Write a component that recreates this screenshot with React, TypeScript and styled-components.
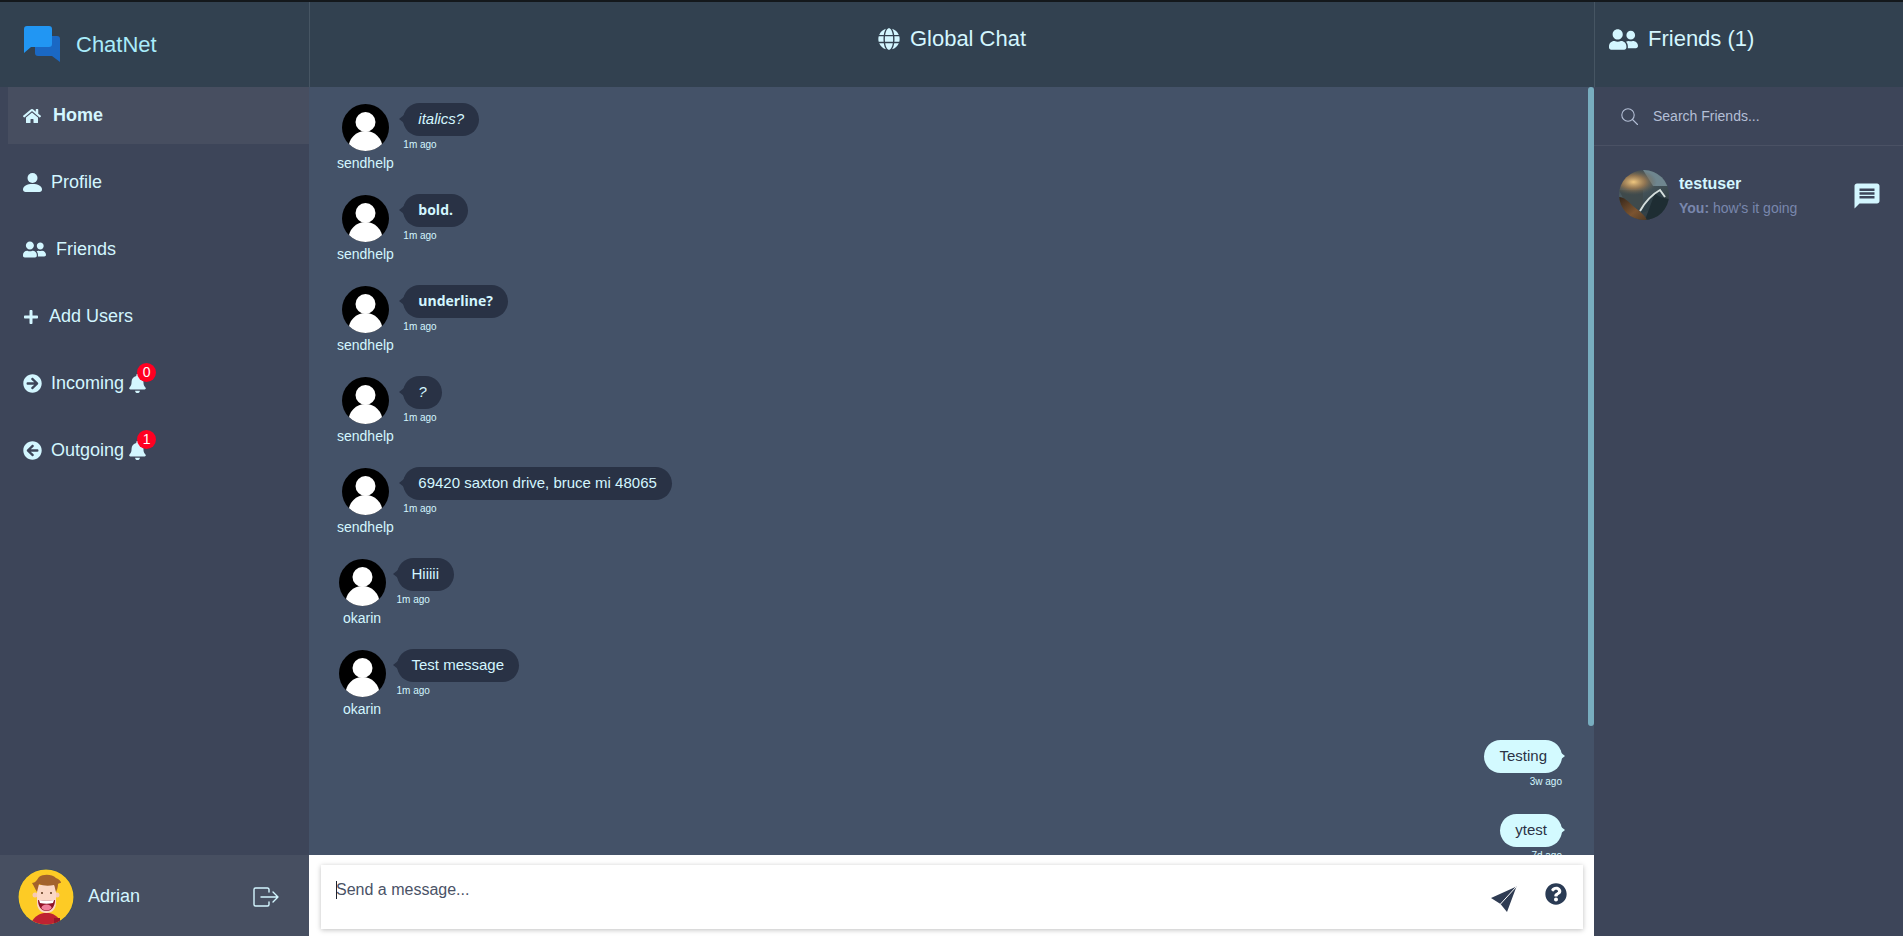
import React from "react";
import styled, { createGlobalStyle } from "styled-components";
import {
  FaArrowCircleLeft,
  FaArrowCircleRight,
  FaBell,
  FaGlobe,
  FaHome,
  FaPlus,
  FaQuestionCircle,
  FaUserFriends,
} from "react-icons/fa";
import { MdMessage } from "react-icons/md";

const MINT = "#d3f6ff";

interface Message {
  user: string;
  text: string;
  time: string;
  variant?: "italic" | "bold";
}

const incoming: Message[] = [
  { user: "sendhelp", text: "italics?", time: "1m ago", variant: "italic" },
  { user: "sendhelp", text: "bold.", time: "1m ago", variant: "bold" },
  { user: "sendhelp", text: "underline?", time: "1m ago", variant: "bold" },
  { user: "sendhelp", text: "?", time: "1m ago", variant: "italic" },
  { user: "sendhelp", text: "69420 saxton drive, bruce mi 48065", time: "1m ago" },
  { user: "okarin", text: "Hiiiii", time: "1m ago" },
  { user: "okarin", text: "Test message", time: "1m ago" },
];

const outgoing = [
  { text: "Testing", time: "3w ago" },
  { text: "ytest", time: "7d ago" },
];

const GlobalStyle = createGlobalStyle`
  html, body, #root {
    margin: 0;
    height: 100%;
    overflow: hidden;
  }
  body {
    font-family: "Liberation Sans", Arial, sans-serif;
    background: #3d4559;
  }
  * {
    box-sizing: border-box;
  }
`;

const Layout = styled.div`
  display: grid;
  grid-template-columns: 309px 1fr 309px;
  height: 100vh;
  border-top: 2px solid #14181c;
`;

const Column = styled.div`
  display: flex;
  flex-direction: column;
  min-height: 0;
  min-width: 0;
  background: #3d4559;
`;

const Header = styled.header<{ $center?: boolean; $divided?: boolean }>`
  height: 85px;
  flex-shrink: 0;
  display: flex;
  background: #324150;
  color: ${MINT};
  font-size: 22px;
  justify-content: ${({ $center }) => ($center ? "center" : "flex-start")};
  border-left: ${({ $divided }) => ($divided ? "1px solid #465563" : "none")};
`;

const Brand = styled.div`
  display: flex;
  align-items: center;
  gap: 14px;
  padding-left: 24px;
  color: #a9ecfb;
`;

const HeaderTitle = styled.div`
  display: flex;
  align-items: center;
  height: 74px;
  gap: 10px;
`;

const FriendsTitle = styled(HeaderTitle)`
  padding-left: 14px;
`;

const Nav = styled.nav`
  flex: 1;
  display: flex;
  flex-direction: column;
  gap: 10px;
  padding-left: 8px;
`;

const NavItem = styled.a<{ $active?: boolean; $gap?: number }>`
  height: 57px;
  display: flex;
  align-items: center;
  gap: ${({ $gap }) => $gap ?? 10}px;
  padding-left: 15px;
  font-size: 18px;
  color: ${MINT};
  font-weight: ${({ $active }) => ($active ? 700 : 400)};
  background: ${({ $active }) => ($active ? "#474e60" : "transparent")};
`;

const BellWrap = styled.span`
  position: relative;
  display: flex;
  margin-left: -5px;
`;

const Badge = styled.span`
  position: absolute;
  left: 9px;
  top: -11px;
  width: 19px;
  height: 19px;
  border-radius: 50%;
  background: #ff0022;
  color: #fff;
  font-size: 14px;
  line-height: 19px;
  text-align: center;
`;

const UserBar = styled.footer`
  height: 81px;
  flex-shrink: 0;
  display: flex;
  align-items: center;
  padding: 2px 30px 0 18px;
  background: #474f61;
  color: ${MINT};
  font-size: 18px;
`;

const UserName = styled.span`
  flex: 1;
  margin-left: 14px;
`;

const ChatPane = styled.div`
  position: relative;
  flex: 1;
  min-height: 0;
  overflow: hidden;
  background: #445268;
`;

const ScrollThumb = styled.div`
  position: absolute;
  top: 0;
  right: 0;
  width: 6px;
  height: 639px;
  border-radius: 3px;
  background: #78adbf;
`;

const MessageList = styled.div`
  display: flex;
  flex-direction: column;
  gap: 23px;
  padding: 16px 32px 0 28px;
`;

const IncomingRow = styled.div`
  display: flex;
  align-items: flex-start;
  gap: 9.5px;
`;

const Sender = styled.div`
  min-width: 50px;
  display: flex;
  flex-direction: column;
  align-items: center;
  padding-top: 1px;
  font-size: 14px;
  line-height: 16px;
  color: ${MINT};
`;

const SenderName = styled.span`
  margin-top: 4px;
`;

const BubbleColumn = styled.div<{ $right?: boolean }>`
  display: flex;
  flex-direction: column;
  align-items: ${({ $right }) => ($right ? "flex-end" : "flex-start")};
  padding-bottom: ${({ $right }) => ($right ? "3px" : "0")};
`;

const Bubble = styled.div<{ $mine?: boolean; $variant?: string }>`
  position: relative;
  height: 33px;
  padding: 0 15px 2px;
  border-radius: 17px;
  display: flex;
  align-items: center;
  font-size: ${({ $variant }) => ($variant === "bold" ? "14px" : "15px")};
  background: ${({ $mine }) => ($mine ? "#d3faff" : "#293245")};
  color: ${({ $mine }) => ($mine ? "#2b3245" : MINT)};
  font-style: ${({ $variant }) => ($variant === "italic" ? "italic" : "normal")};
  font-weight: ${({ $variant }) => ($variant === "bold" ? 700 : 400)};
  font-family: ${({ $variant }) =>
    $variant === "bold" ? '"Open Sans", sans-serif' : '"Liberation Sans", sans-serif'};

  &::before {
    content: "";
    position: absolute;
    top: 12px;
    ${({ $mine }) => ($mine ? "right: -3px;" : "left: -4px;")}
    border-top: 4.5px solid transparent;
    border-bottom: 4.5px solid transparent;
    ${({ $mine }) =>
      $mine ? "border-left: 5px solid #d3faff;" : "border-right: 5px solid #293245;"}
  }
`;

const Stamp = styled.span`
  margin-top: 3px;
  font-size: 10px;
  line-height: 12px;
  color: ${MINT};
`;

const OutgoingRow = styled.div`
  display: flex;
  justify-content: flex-end;
`;

const Composer = styled.div`
  height: 81px;
  flex-shrink: 0;
  background: #fff;
  padding: 10px 11px 7px 12px;
`;

const ComposerBox = styled.div`
  height: 64px;
  display: flex;
  align-items: flex-start;
  background: #fff;
  box-shadow: 0 1px 5px rgba(0, 0, 0, 0.25);
  padding: 16px 16px 0 15px;
`;

const InputWrap = styled.div`
  position: relative;
  flex: 1;
`;

const Caret = styled.span`
  position: absolute;
  left: 0;
  top: 0;
  width: 1px;
  height: 18px;
  background: #1c2230;
`;

const MessageInput = styled.textarea`
  display: block;
  width: 100%;
  height: 32px;
  border: none;
  outline: none;
  resize: none;
  padding: 0;
  font-family: "Liberation Sans", sans-serif;
  font-size: 16px;
  line-height: 18px;
  color: #2b3245;

  &::placeholder {
    color: #4a5266;
    opacity: 1;
  }
`;

const ComposerActions = styled.div`
  display: flex;
  align-items: flex-start;
  gap: 28px;
  color: #2a3b54;

  > svg:last-child {
    margin-top: 2px;
  }
`;

const SendIcon = styled.svg`
  width: 26px;
  height: 26px;
  margin-top: 5px;
`;

const SearchRow = styled.div`
  height: 59px;
  flex-shrink: 0;
  display: flex;
  align-items: center;
  gap: 13px;
  padding-left: 27px;
  border-bottom: 1px solid #4a5164;
`;

const SearchInput = styled.input`
  flex: 1;
  min-width: 0;
  border: none;
  outline: none;
  background: transparent;
  font-family: "Liberation Sans", sans-serif;
  font-size: 14px;
  color: #c3cde0;

  &::placeholder {
    color: #b4bfd6;
    opacity: 1;
  }
`;

const FriendRow = styled.div`
  display: flex;
  align-items: center;
  padding: 24px 21px 0 25px;
`;

const FriendText = styled.div`
  flex: 1;
  margin-left: 10px;
`;

const FriendName = styled.div`
  font-size: 16px;
  line-height: 18px;
  font-weight: 700;
  color: ${MINT};
`;

const LastMessage = styled.div`
  margin-top: 7px;
  font-size: 14px;
  line-height: 16px;
  color: #7987ad;

  b {
    font-weight: 700;
  }
`;

const ChatIcon = styled(MdMessage)`
  margin-top: 2px;
`;

const Logo = () => (
  <svg width="38" height="38" viewBox="0 0 38 38">
    <path d="M11 10h22a3 3 0 0 1 3 3v23l-8-6H14a3 3 0 0 1-3-3z" fill="#1a68c4" />
    <path d="M3 0h22a3 3 0 0 1 3 3v15a3 3 0 0 1-3 3H7l-7 6V3a3 3 0 0 1 3-3z" fill="#2196f3" />
  </svg>
);

const PersonIcon = () => (
  <svg width="19" height="19" viewBox="0 0 19 19" fill="currentColor">
    <circle cx="9.500" cy="5" r="5" />
    <path d="M0 16.500C0 13 4 11 9.500 11S19 13 19 16.500c0 1.500-1 2.500-2.500 2.500h-14C1 19 0 18 0 16.500z" />
  </svg>
);

const DefaultAvatar = () => (
  <svg width="47" height="47" viewBox="0 0 47 47">
    <defs>
      <clipPath id="avatarClip">
        <circle cx="23.5" cy="23.5" r="23.5" />
      </clipPath>
    </defs>
    <circle cx="23.5" cy="23.5" r="23.5" fill="#000" />
    <g clipPath="url(#avatarClip)" fill="#fff">
      <circle cx="23.5" cy="18" r="10" />
      <ellipse cx="23.5" cy="44" rx="17" ry="17" />
    </g>
  </svg>
);

const AdrianAvatar = () => (
  <svg width="56" height="56" viewBox="0 0 56 56">
    <defs>
      <clipPath id="adrianClip">
        <circle cx="28" cy="28" r="27.5" />
      </clipPath>
    </defs>
    <circle cx="28" cy="28" r="28" fill="#2b4a63" />
    <g clipPath="url(#adrianClip)">
      <rect width="56" height="56" fill="#fdcb25" />
      <path d="M13 56c1-7 7-11 13-12h5c6 1 11 5 13 12z" fill="#bf2231" />
      <rect x="36" y="49" width="6" height="5" fill="#96192a" />
      <circle cx="17" cy="26" r="2.500" fill="#f6c9b4" />
      <circle cx="39" cy="26" r="2.500" fill="#f6c9b4" />
      <path d="M19 16h19v18c0 6-4 10-9.500 10S19 40 19 34z" fill="#fbd7c4" />
      <path d="M14 14c3 0 5-3 7-6 4-3 13-3 17 1 3 1 5 3 5 5-1 0-2 0-3 1 0 3-1 6-2 8-1-3-1-5-2-7-5 1-11 1-15-1l-2 8c-2-3-3-6-5-9z" fill="#a3622c" />
      <path d="M20 31c6 1 11 1 17 0 0 6-3 11-8.500 11S20 37 20 31z" fill="#8e1226" />
      <path d="M21 31c5 1 10 1 15 0l-1 3c-4 1-9 1-13 0z" fill="#fff" />
      <ellipse cx="28.500" cy="38.500" rx="5" ry="3" fill="#f07f9c" />
      <circle cx="24" cy="24" r="1" fill="#5a3318" />
      <circle cx="33" cy="24" r="1" fill="#5a3318" />
    </g>
  </svg>
);

const FriendAvatar = () => (
  <svg width="50" height="50" viewBox="0 0 50 50">
    <defs>
      <clipPath id="friendClip">
        <circle cx="25" cy="25" r="25" />
      </clipPath>
      <radialGradient id="sunGlow" cx="30%" cy="24%" r="26%" gradientTransform="translate(-0.25 0) scale(1.8 1)">
        <stop offset="0%" stopColor="#f0c77f" />
        <stop offset="50%" stopColor="#9d7a50" stopOpacity="0.85" />
        <stop offset="100%" stopColor="#5e5c52" stopOpacity="0" />
      </radialGradient>
      <linearGradient id="skyFade" x1="0" y1="0" x2="0.6" y2="1">
        <stop offset="0%" stopColor="#3b4448" />
        <stop offset="40%" stopColor="#4a5a60" />
        <stop offset="100%" stopColor="#2d3a40" />
      </linearGradient>
      <linearGradient id="cliffFade" x1="0" y1="0" x2="1" y2="1">
        <stop offset="0%" stopColor="#33251a" />
        <stop offset="60%" stopColor="#7c5430" />
        <stop offset="100%" stopColor="#4f3a26" />
      </linearGradient>
    </defs>
    <g clipPath="url(#friendClip)">
      <rect width="50" height="50" fill="url(#skyFade)" />
      <path d="M24 0h26v16L34 16z" fill="#6f868f" />
      <path d="M0 20h24v20L6 32z" fill="#3f4a4c" />
      <rect width="50" height="50" fill="url(#sunGlow)" />
      <path d="M22 41c6-9 12-17 20-22l4 6c-5 8-13 15-23 18z" fill="#2d3e45" />
      <path d="M36 23c3 3 6 5 14 6v21H26z" fill="#1e2d33" />
      <path d="M0 27c5 0 9 4 14 9 5 4 12 9 14 14H0z" fill="url(#cliffFade)" />
      <path d="M21 41c5-9 11-16 20-21l5 7" fill="none" stroke="#d4dedc" strokeWidth="2" />
    </g>
  </svg>
);

const ExitIcon = () => (
  <svg width="26" height="20" viewBox="0 0 26 20" fill="none" stroke={MINT} strokeWidth="1.4" strokeLinecap="round" strokeLinejoin="round">
    <path d="M16 5V2.5A1.5 1.5 0 0 0 14.5 1h-12A1.5 1.5 0 0 0 1 2.5v15A1.5 1.5 0 0 0 2.5 19h12a1.5 1.5 0 0 0 1.5-1.5V15" />
    <path d="M8 10h17M20 5l5 5-5 5" />
  </svg>
);

const SearchGlyph = () => (
  <svg width="17" height="17" viewBox="0 0 17 17" fill="none" stroke="#b4bfd6" strokeWidth="1.1" strokeLinecap="round">
    <circle cx="7" cy="7" r="6.2" />
    <path d="M11.5 11.5l5 5" />
  </svg>
);

export default function App() {
  return (
    <>
      <GlobalStyle />
      <Layout>
        <Column>
          <Header>
            <Brand>
              <Logo />
              ChatNet
            </Brand>
          </Header>
          <Nav>
            <NavItem $active $gap={12}>
              <FaHome size={18} />
              Home
            </NavItem>
            <NavItem $gap={9}>
              <PersonIcon />
              Profile
            </NavItem>
            <NavItem>
              <FaUserFriends size={23} />
              Friends
            </NavItem>
            <NavItem>
              <FaPlus size={16} />
              Add Users
            </NavItem>
            <NavItem $gap={9}>
              <FaArrowCircleRight size={19} />
              Incoming
              <BellWrap>
                <FaBell size={19} />
                <Badge>0</Badge>
              </BellWrap>
            </NavItem>
            <NavItem $gap={9}>
              <FaArrowCircleLeft size={19} />
              Outgoing
              <BellWrap>
                <FaBell size={19} />
                <Badge>1</Badge>
              </BellWrap>
            </NavItem>
          </Nav>
          <UserBar>
            <AdrianAvatar />
            <UserName>Adrian</UserName>
            <ExitIcon />
          </UserBar>
        </Column>

        <Column>
          <Header $center $divided>
            <HeaderTitle>
              <FaGlobe size={22} />
              Global Chat
            </HeaderTitle>
          </Header>
          <ChatPane>
            <MessageList>
              {incoming.map((message, index) => (
                <IncomingRow key={index}>
                  <Sender>
                    <DefaultAvatar />
                    <SenderName>{message.user}</SenderName>
                  </Sender>
                  <BubbleColumn>
                    <Bubble $variant={message.variant}>{message.text}</Bubble>
                    <Stamp>{message.time}</Stamp>
                  </BubbleColumn>
                </IncomingRow>
              ))}
              {outgoing.map((message, index) => (
                <OutgoingRow key={index}>
                  <BubbleColumn $right>
                    <Bubble $mine>{message.text}</Bubble>
                    <Stamp>{message.time}</Stamp>
                  </BubbleColumn>
                </OutgoingRow>
              ))}
            </MessageList>
            <ScrollThumb />
          </ChatPane>
          <Composer>
            <ComposerBox>
              <InputWrap>
                <MessageInput placeholder="Send a message..." />
                <Caret />
              </InputWrap>
              <ComposerActions>
                <SendIcon viewBox="0 0 26 26">
                  <path d="M25.5 0.5L0 12l9.5 6 6.500 8z" fill="#2f3b52" />
                  <path d="M25 1L9.500 18" stroke="#fff" strokeWidth="1" />
                </SendIcon>
                <FaQuestionCircle size={22} />
              </ComposerActions>
            </ComposerBox>
          </Composer>
        </Column>

        <Column>
          <Header $divided>
            <FriendsTitle>
              <FaUserFriends size={29} />
              Friends (1)
            </FriendsTitle>
          </Header>
          <SearchRow>
            <SearchGlyph />
            <SearchInput placeholder="Search Friends..." />
          </SearchRow>
          <FriendRow>
            <FriendAvatar />
            <FriendText>
              <FriendName>testuser</FriendName>
              <LastMessage>
                <b>You:</b> how's it going
              </LastMessage>
            </FriendText>
            <ChatIcon size={30} color={MINT} />
          </FriendRow>
        </Column>
      </Layout>
    </>
  );
}
